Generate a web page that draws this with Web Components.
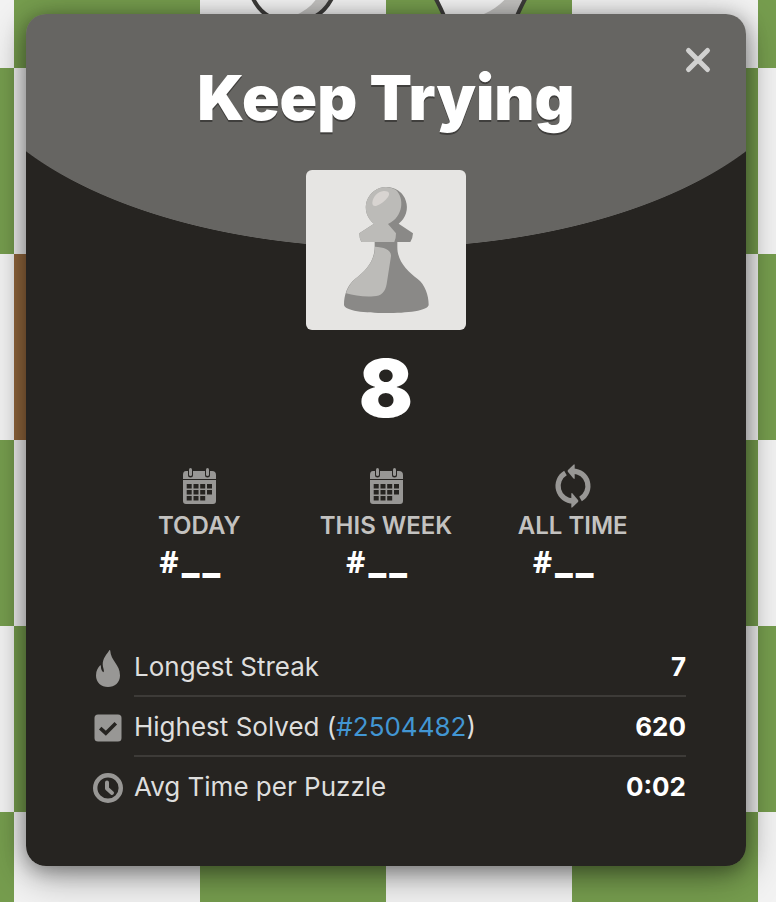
<!DOCTYPE html>
<html lang="en">
<head>
<meta charset="utf-8">
<title>Puzzle Rush</title>
<style>
html, body { margin: 0; min-height: 100%; }
body { font-family: Inter, "Liberation Sans", sans-serif; background: #739a4c; }
</style>
</head>
<body>
<puzzle-board>
  <result-modal heading="Keep Trying" score="8">
    <rank-stat slot="ranks" icon="calendar" label="Today"></rank-stat>
    <rank-stat slot="ranks" icon="calendar" label="This week"></rank-stat>
    <rank-stat slot="ranks" icon="cycle" label="All time"></rank-stat>
    <result-row icon="flame" value="7">Longest Streak</result-row>
    <result-row icon="check" value="620">Highest Solved (<puzzle-link number="2504482"></puzzle-link>)</result-row>
    <result-row icon="clock" value="0:02">Avg Time per Puzzle</result-row>
  </result-modal>
</puzzle-board>

<script>
const ICONS = {
  calendar: ['0 0 44 44', `
    <path fill="currentColor" d="M9 7h26q4 0 4 4v4H6v-4q0-4 3-4zM6 16h33v21q0 3-3 3H9q-3 0-3-3z"/>
    <g fill="#262421">
      <path d="M11 5h5v6a2.500 2.500 0 0 1-5 0zM28 5h5v6a2.500 2.500 0 0 1-5 0z"/>
      <path d="M9.700 20h5v4.400h-5zM16.500 20h5v4.400h-5zM23.200 20h5v4.400h-5zM30 20h5v4.400h-5zM9.700 26h5v4.400h-5zM16.500 26h5v4.400h-5zM23.200 26h5v4.400h-5zM30 26h5v4.400h-5zM9.700 32h5v4.400h-5zM16.500 32h5v4.400h-5zM23.200 32h5v4.400h-5z"/>
    </g>
    <rect x="12" y="4" width="3" height="8" rx="1.500" fill="currentColor"/>
    <rect x="29" y="4" width="3" height="8" rx="1.500" fill="currentColor"/>`],
  cycle: ['0 0 44 45', `
    <g id="half"><path fill="none" stroke="currentColor" stroke-width="5.300" d="M14.300 9.300A15.300 15.300 0 0 0 22 37.800"/>
    <path fill="currentColor" d="M20.300 30.500q0-1.200 1.200-.4l5.600 6.700q.7 1 0 2l-5.600 5.500q-1.200.9-1.200-.4z"/></g>
    <use href="#half" transform="rotate(180 22 22.500)"/>`],
  flame: ['0 0 32 44', `<path fill="currentColor" d="M17.300 6.300Q18 5.500 18.200 6.600C18.700 17 28 20.500 28 31.500 28 38.500 22.700 43 16 43S4 38.500 4 31.500C4 26.500 6 23.500 8 21.500Q8.900 20.800 8.900 22C8.900 25 9.800 27.800 11.700 28.200 12.500 26 10.700 24 10.700 20.500 10.700 14 14.500 11 17.300 6.300z"/>`],
  check: ['0 0 32 44', `<rect x="2.500" y="10.500" width="27" height="27" rx="3.500" fill="currentColor"/><path fill="none" stroke="#262421" stroke-width="3.600" d="M8.200 24.200l5.600 5 10-10"/>`],
  clock: ['0 0 32 44', `<circle cx="16" cy="24" r="12.800" fill="none" stroke="currentColor" stroke-width="4.400"/><path fill="none" stroke="currentColor" stroke-width="4" stroke-linecap="round" stroke-linejoin="round" d="M15 18.500v6l5 4.500"/>`]
};
const icon = name => `<svg aria-hidden="true" viewBox="${ICONS[name][0]}">${ICONS[name][1]}</svg>`;

class BaseElement extends HTMLElement {
  connectedCallback() {
    if (this.shadowRoot) return;
    this.attachShadow({ mode: 'open' }).innerHTML = this.render();
  }
}

customElements.define('puzzle-board', class extends BaseElement {
  render() {
    return `<style>
      :host { display: block; position: relative; isolation: isolate; overflow: hidden; box-sizing: border-box;
        min-height: 100vh; padding: 14px 30px 36px 26px;
        background: linear-gradient(#94683e, #94683e) 14px 254px / 186px 186px no-repeat,
          conic-gradient(#769d4e 25%, #f3f3f3 0 50%, #769d4e 0 75%, #f3f3f3 0) 14px 68px / 372px 372px; }
      .pieces { position: absolute; z-index: -1; top: 0; left: 240px; width: 300px; height: 24px; }
    </style>
    <svg class="pieces" aria-hidden="true" viewBox="0 0 300 24">
      <path fill="#f5f5f5" d="M11-6Q22 22 52 22T94-6z"/>
      <path fill="#c4c3c1" d="M78-4Q72 8 54 16l0 8 24-6L93-4z"/>
      <path fill="none" stroke="#3d3c3a" stroke-width="4" d="M11-6Q22 22 52 22T94-6"/>
      <path fill="#f5f5f5" d="M193-6l14 28h64l14-28z"/>
      <path fill="#c4c3c1" d="M268-4Q258 8 244 14v8h30L285-4z"/>
      <path fill="none" stroke="#3d3c3a" stroke-width="4" d="M193-6q5 8 12 24M288-6q-5 8-12 24"/>
    </svg>
    <slot></slot>`;
  }
});

customElements.define('pawn-avatar', class extends BaseElement {
  render() {
    return `<style>
      :host { display: block; width: 160px; height: 160px; border-radius: 6px; background: #e6e5e3; }
      svg { display: block; width: 100%; height: 100%; }
    </style>
    <svg role="img" aria-label="Pawn" viewBox="30 30 480 480">
      <path fill="#8a8987" d="M270 81a61 61 0 0 1 38 110l43 29q-1 17-8 26H196q-6-9-6-26l44-29A61 61 0 0 1 270 81z"/>
      <path fill="#bcbbb8" d="M270 81q16 0 29 8c27 24 24 81-23 103l24 28q0 16-5 26H196q-6-9-6-26l44-29A61 61 0 0 1 270 81z"/>
      <path fill="#8a8987" d="M236 246h68v16c0 42 30 71 61 95 22 17 33 49 33 77 0 18-66 25-128 25s-126-7-126-25c0-29 10-59 33-77 32-24 59-54 59-96z"/>
      <path fill="#bcbbb8" d="M237 260c25 1 50 9 48 29l-13 83c-4 24-16 36-39 37-29 2-59-2-83-9 5-16 13-31 27-43 32-24 60-54 60-97z"/>
      <path fill="#d8d4d1" d="M229 129c1-17 15-35 34-36 16-1 20 8 13 18-8 12-21 21-34 26-8 3-13-1-13-8z"/>
    </svg>`;
  }
});

customElements.define('rank-stat', class extends BaseElement {
  render() {
    return `<style>
      :host { display: flex; flex-direction: column; align-items: center; }
      svg { width: 44px; height: 44px; color: #989795; }
      .label { font-size: 24px; line-height: 36px; font-weight: 600; color: #c3c2c0; text-transform: uppercase; white-space: nowrap; }
      .value { width: 80px; height: 38px; display: flex; align-items: baseline; gap: 3px; font-size: 36px; line-height: 32px; font-weight: 900; color: #fff; }
      .hash { font: 700 30px/32px "Open Sans", sans-serif; }
    </style>
    ${icon(this.getAttribute('icon'))}
    <span class="label">${this.getAttribute('label')}</span>
    <span class="value"><span class="hash">#</span><span>_</span><span>_</span></span>`;
  }
});

customElements.define('puzzle-link', class extends BaseElement {
  render() {
    const n = this.getAttribute('number');
    return `<style>:host { display: inline; } a { color: #4296d3; text-decoration: none; } a:hover { text-decoration: underline; }</style><a href="#${n}">#${n}</a>`;
  }
});

customElements.define('result-row', class extends BaseElement {
  render() {
    return `<style>
      :host { display: flex; gap: 10px; height: 60px; --line: #3d3b38; }
      :host(:last-child) { --line: transparent; }
      svg { flex: none; width: 32px; height: 44px; margin-top: 7px; color: #989795; }
      .text { flex: 1; display: flex; align-items: center; justify-content: space-between; gap: 16px; padding-top: 2px;
        border-bottom: 2px solid var(--line); font-size: 26px; line-height: 32px; color: #dededd; white-space: nowrap; }
      b { font-weight: 700; color: #fff; }
    </style>
    ${icon(this.getAttribute('icon'))}
    <div class="text"><span><slot></slot></span><b>${this.getAttribute('value')}</b></div>`;
  }
});

customElements.define('result-modal', class extends BaseElement {
  render() {
    return `<style>
      :host { display: block; position: relative; box-sizing: border-box; padding: 48px 0 49px; border-radius: 20px;
        background: radial-gradient(ellipse 60% 215px at 50% 19px, #666562 99.700%, #262421 100%);
        box-shadow: 0 10px 40px rgba(0, 0, 0, .35), 0 4px 20px rgba(0, 0, 0, .35); }
      h1, p { margin: 0; text-align: center; color: #fff; font-weight: 900; }
      h1 { font-size: 62px; line-height: 72px; text-shadow: 0 2px 0 #403f3d; }
      p { margin-top: 18px; font-size: 80px; line-height: 80px; }
      pawn-avatar { margin: 36px auto 0; }
      .ranks { display: grid; grid-template-columns: repeat(3, 1fr); margin: 36px 80px 0; }
      .rows { margin: 55px 60px 0 66px; }
      button { position: absolute; top: 22px; right: 24px; width: 48px; height: 48px; padding: 0; border: 0; background: none; cursor: pointer; }
      button svg { display: block; width: 48px; height: 48px; }
    </style>
    <h1>${this.getAttribute('heading')}</h1>
    <button type="button" aria-label="Close"><svg aria-hidden="true" viewBox="0 0 48 48"><path fill="none" stroke="#d1d1d0" stroke-width="5" stroke-linecap="round" d="M14.500 14.500l19 19M33.500 14.500l-19 19"/></svg></button>
    <pawn-avatar></pawn-avatar>
    <p>${this.getAttribute('score')}</p>
    <div class="ranks"><slot name="ranks"></slot></div>
    <div class="rows"><slot></slot></div>`;
  }
});
</script>
</body>
</html>
